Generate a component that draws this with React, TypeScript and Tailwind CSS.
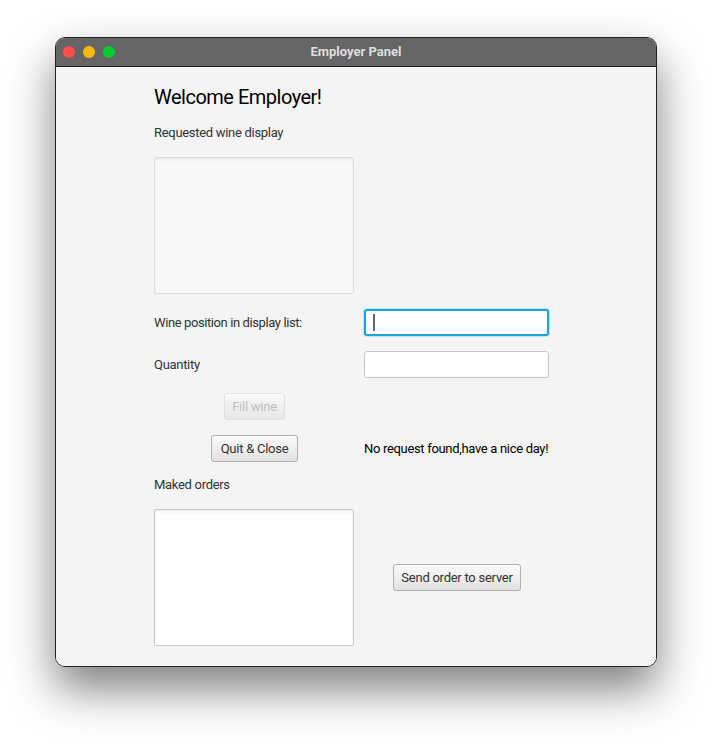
import React from 'react'

const font = { fontFamily: 'Roboto, "Noto Sans", sans-serif' }

function FxButton({ label, disabled, className = '' }: { label: string; disabled?: boolean; className?: string }) {
  return (
    <button
      className={`h-[27px] rounded-[3px] border text-[13px] leading-none whitespace-nowrap tracking-[-0.25px] bg-gradient-to-b from-[#fbfbfb] to-[#e2e2e2] shadow-[inset_0_1px_0_rgba(255,255,255,0.8)] ${
        disabled ? 'border-[#d8d8d8] text-[#a8a8a8] opacity-70' : 'border-[#b0b0b0] text-[#333]'
      } ${className}`}
    >
      {label}
    </button>
  )
}

export default function App() {
  return (
    <div className="w-[712px] h-[740px] bg-white pt-[37px] pl-[55px]" style={font}>
      <div className="w-[602px] h-[630px] rounded-[10px] border border-[#222] overflow-hidden flex flex-col shadow-[0_22px_45px_rgba(0,0,0,0.5)]">
        {/* Title bar */}
        <div className="h-[29px] shrink-0 bg-[#656565] border-b border-[#1e1e1e] flex items-center relative">
          <div className="flex items-center gap-[8px] pl-[7px]">
            <span className="w-[12px] h-[12px] rounded-full bg-[#fe4f4b]" />
            <span className="w-[12px] h-[12px] rounded-full bg-[#fdb80e]" />
            <span className="w-[12px] h-[12px] rounded-full bg-[#08c930]" />
          </div>
          <div className="absolute inset-0 flex items-center justify-center text-[13px] font-bold text-[#dedede]">
            Employer Panel
          </div>
        </div>

        {/* Content */}
        <div className="flex-1 bg-[#f4f4f4] pl-[98px] pt-[18px] text-[13px] tracking-[-0.3px]">
          <div className="text-[20px] leading-[24px] text-black tracking-[-0.5px]">Welcome Employer!</div>
          <div className="mt-[16px] leading-[16px] text-[#333]">Requested wine display</div>
          <div className="mt-[16px] w-[200px] h-[137px] rounded-[2px] border border-[#dcdcdc] bg-[#f8f8f8] shadow-[inset_0_2px_3px_rgba(0,0,0,0.05)]" />

          <div className="mt-[15px] flex items-center">
            <div className="w-[210px] text-[#333] whitespace-nowrap tracking-[-0.4px]">Wine position in display list:</div>
            <div className="w-[185px] h-[27px] rounded-[3px] border-[2px] border-[#1aa5d9] bg-white flex items-center pl-[7px] shadow-[0_0_0_1px_#bfe4f3]">
              <span className="w-[2px] h-[17px] bg-[#666]" />
            </div>
          </div>

          <div className="mt-[15px] flex items-center">
            <div className="w-[210px] text-[#333]">Quantity</div>
            <div className="w-[185px] h-[27px] rounded-[3px] border border-[#c4c4c4] bg-white" />
          </div>

          <div className="mt-[15px] pl-[70px]">
            <FxButton label="Fill wine" disabled className="w-[61px]" />
          </div>

          <div className="mt-[15px] flex items-center">
            <div className="w-[210px] pl-[57px]">
              <FxButton label="Quit & Close" className="w-[87px]" />
            </div>
            <div className="text-black whitespace-nowrap tracking-[-0.32px]">No request found,have a nice day!</div>
          </div>

          <div className="mt-[15px] leading-[16px] text-[#333]">Maked orders</div>

          <div className="mt-[16px] flex items-center">
            <div className="w-[200px] h-[137px] rounded-[2px] border border-[#c8c8c8] bg-white shadow-[inset_0_2px_3px_rgba(0,0,0,0.06)]" />
            <FxButton label="Send order to server" className="ml-[39px] w-[128px]" />
          </div>
        </div>
      </div>
    </div>
  )
}
